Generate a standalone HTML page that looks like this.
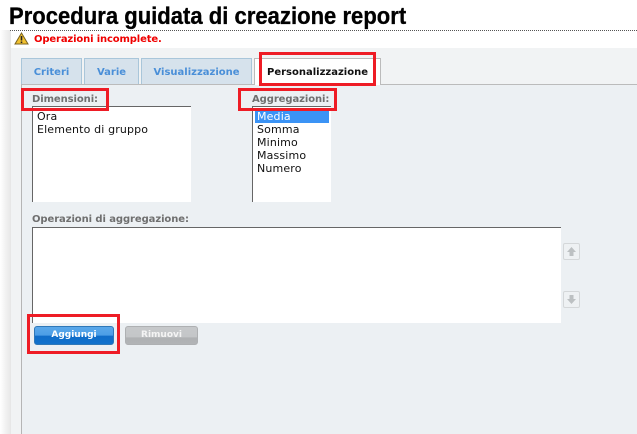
<!DOCTYPE html>
<html>
<head>
<meta charset="utf-8">
<style>
html,body{margin:0;padding:0;width:637px;height:434px;overflow:hidden;background:#fff;font-family:"Liberation Sans",sans-serif}
div,span{position:absolute;box-sizing:border-box;white-space:nowrap}
.tab{top:58px;height:26px;background:#d6e2ec;border:1px solid #a9c6da;border-bottom:none;color:#4a8fd8;font:bold 10px/27px "DejaVu Sans",sans-serif;text-align:center}
.lbl{font:bold 10px/12px "DejaVu Sans",sans-serif;color:#6f6f6f;letter-spacing:-.08px}
.list{background:#fff;border-top:1px solid #666;border-left:1px solid #666;font:11px/13px "DejaVu Sans",sans-serif;color:#111;letter-spacing:.15px}
.red{border:3px solid #ee1c25}
.sq{left:563px;width:17px;height:17px;background:#eef1f3;border:1px solid #d4d7d9;border-radius:2px}
</style>
</head>
<body>
<div style="left:0;top:30px;width:11px;height:404px;background:linear-gradient(90deg,#fff,#e6e6e6)"></div>
<div style="left:9px;top:3px;font:bold 22px/28px 'Liberation Sans',sans-serif;color:#000;letter-spacing:.03px;-webkit-text-stroke:.3px #000;transform:scaleY(1.08);transform-origin:0 22px">Procedura guidata di creazione report</div>
<div style="left:10px;top:30px;width:627px;border-top:1px dotted #555"></div>
<svg style="position:absolute;left:14px;top:32px" width="15" height="13" viewBox="0 0 15 13"><path d="M7.5 1L14 12H1Z" fill="#f2c230" stroke="#7a6320" stroke-width="1"/><path d="M7.5 4v4.500M7.500 9.500v1.500" stroke="#222" stroke-width="1.600"/></svg>
<div style="left:34px;top:33px;font:bold 10px/14px 'DejaVu Sans',sans-serif;color:#f00000;letter-spacing:-.14px">Operazioni incomplete.</div>

<div style="left:11px;top:48px;width:626px;height:386px;background:#f1f3f4"></div>
<div style="left:21px;top:84px;width:616px;height:350px;background:#ecf0f3;border-left:1px solid #b5b5b5;border-top:1px solid #bbb"></div>

<div class="tab" style="left:21px;width:61px">Criteri</div>
<div class="tab" style="left:84px;width:55px">Varie</div>
<div class="tab" style="left:141px;width:111px">Visualizzazione</div>
<div class="tab" style="left:254px;width:127px;height:27px;background:#fff;border-color:#bbb;color:#111">Personalizzazione</div>

<div class="lbl" style="left:32px;top:94px">Dimensioni:</div>
<div class="list" style="left:32px;top:106px;width:159px;height:96px"><span style="left:4px;top:3px">Ora</span><span style="left:4px;top:16px">Elemento di gruppo</span></div>

<div class="lbl" style="left:252px;top:94px">Aggregazioni:</div>
<div class="list" style="left:252px;top:106px;width:79px;height:96px">
<div style="left:2px;top:3px;width:74px;height:13px;background:#3b93f5"></div>
<span style="left:4px;top:3px;color:#fff">Media</span>
<span style="left:4px;top:16px">Somma</span>
<span style="left:4px;top:29px">Minimo</span>
<span style="left:4px;top:42px">Massimo</span>
<span style="left:4px;top:55px">Numero</span>
</div>

<div class="lbl" style="left:32px;top:214px">Operazioni di aggregazione:</div>
<div class="list" style="left:32px;top:227px;width:529px;height:96px"></div>

<div class="sq" style="top:243px"><svg style="position:absolute;left:1px;top:1px" width="13" height="13" viewBox="0 0 13 13"><path d="M6.500 2L11 7H8.500V11H4.500V7H2Z" fill="#bcc0c2"/></svg></div>
<div class="sq" style="top:291px"><svg style="position:absolute;left:1px;top:1px" width="13" height="13" viewBox="0 0 13 13"><path d="M4.500 2H8.500V6H11L6.500 11L2 6H4.500Z" fill="#bcc0c2"/></svg></div>

<div style="left:34px;top:326px;width:80px;height:19px;border:1px solid #2f78b8;border-radius:3px;background:linear-gradient(#5aa8ea 0,#4b9de6 50%,#0f6cc8 52%,#1272cc 100%);color:#fff;font:bold 9px/16px 'DejaVu Sans',sans-serif;text-align:center">Aggiungi</div>
<div style="left:125px;top:326px;width:73px;height:19px;border:1px solid #aeb0b2;border-radius:3px;background:linear-gradient(#c6c8ca 0,#c4c6c8 60%,#aeb0b2 62%,#b2b4b6 100%);color:#f4f4f4;font:bold 9px/16px 'DejaVu Sans',sans-serif;text-align:center">Rimuovi</div>

<div class="red" style="left:21px;top:88px;width:88px;height:23px"></div>
<div class="red" style="left:238px;top:88px;width:99px;height:23px"></div>
<div class="red" style="left:259px;top:52px;width:117px;height:34px"></div>
<div class="red" style="left:27px;top:314px;width:93px;height:40px"></div>
</body>
</html>
